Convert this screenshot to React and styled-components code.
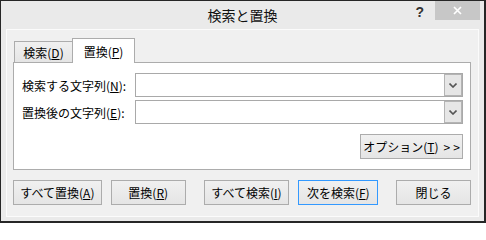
import React from 'react'
import styled, { createGlobalStyle } from 'styled-components'

const GlobalStyle = createGlobalStyle`
    html, body {
        margin: 0;
        padding: 0;
        background: #ffffff;
    }
    body {
        font-family: "Noto Sans CJK JP", "Noto Sans", sans-serif;
    }
`

const fontStack = `"Noto Sans CJK JP", "Noto Sans", sans-serif`

const Window = styled.div`
    box-sizing: border-box;
    width: 486px;
    height: 223px;
    border-style: solid;
    border-color: #262626;
    border-width: 1px 2px 2px 1px;
    background: #eaeaea;
    padding: 0 5px 4px 5px;
    display: flex;
    flex-direction: column;
    font-family: ${fontStack};
    color: #000;
`
const TitleBar = styled.div`
    height: 28px;
    flex: none;
    display: grid;
    grid-template-columns: 1fr auto 1fr;
    align-items: center;
`
const Title = styled.div`
    grid-column: 2;
    font-size: 14px;
    line-height: 1;
    color: #111;
`
const Controls = styled.div`
    grid-column: 3;
    justify-self: end;
    align-self: start;
    display: flex;
    align-items: flex-start;
    margin-right: -1px;
`
const HelpButton = styled.div`
    font-family: "Liberation Sans", Arial, sans-serif;
    font-weight: bold;
    font-size: 14px;
    line-height: 1;
    color: #333;
    margin-top: 4px;
    margin-right: 11px;
`
const CloseButton = styled.div`
    width: 45px;
    height: 19px;
    background: #c7c7c7;
    display: flex;
    align-items: center;
    justify-content: center;
`
const Client = styled.div`
    flex: 1;
    box-sizing: border-box;
    border: 1px solid #fbfbfb;
    background: #f0f0f0;
    padding: 8px 7px 0 6px;
    display: flex;
    flex-direction: column;
`
const TabRow = styled.div`
    display: flex;
    align-items: flex-end;
    height: 24px;
    padding-left: 1px;
`
const Tab = styled.div`
    box-sizing: border-box;
    width: ${(p) => (p.$active ? 63 : 59)}px;
    height: ${(p) => (p.$active ? 25 : 21)}px;
    margin-left: ${(p) => (p.$active ? -1 : 0)}px;
    margin-bottom: ${(p) => (p.$active ? -1 : 0)}px;
    position: relative;
    z-index: ${(p) => (p.$active ? 1 : 0)};
    border: 1px solid #acacac;
    border-bottom: none;
    background: ${(p) => (p.$active ? '#ffffff' : 'linear-gradient(#f0f0f0, #e5e5e5)')};
    font-size: 12px;
    display: flex;
    align-items: center;
    justify-content: center;
    padding-top: ${(p) => (p.$active ? 0 : 1)}px;
`
const Panel = styled.div`
    box-sizing: border-box;
    height: 108px;
    border: 1px solid #acacac;
    background: #ffffff;
    padding: 10px 7px 10px 8px;
    display: flex;
    flex-direction: column;
`
const FieldRow = styled.div`
    display: grid;
    grid-template-columns: 113px 1fr;
    align-items: center;
    height: 24px;
    margin-top: ${(p) => p.$gap || 0}px;
`
const Label = styled.div`
    font-size: 12px;
    line-height: 1;
    padding-top: 1px;
`
const Combo = styled.div`
    box-sizing: border-box;
    height: 24px;
    border: 1px solid #a9a9a9;
    background: #ffffff;
    display: flex;
    justify-content: flex-end;
`
const DropButton = styled.div`
    box-sizing: border-box;
    width: 18px;
    height: 100%;
    border: 1px solid #b4b4b4;
    background: #e6e6e6;
    display: flex;
    align-items: center;
    justify-content: center;
`
const OptionsRow = styled.div`
    display: flex;
    justify-content: flex-end;
    margin-top: 10px;
`
const Button = styled.div`
    box-sizing: border-box;
    width: ${(p) => p.$w}px;
    height: 25px;
    margin-left: ${(p) => p.$ml || 0}px;
    border: 1px solid ${(p) => (p.$primary ? '#3399ff' : '#acacac')};
    background: linear-gradient(#f0f0f0, #e5e5e5);
    font-size: 12px;
    line-height: 1;
    display: flex;
    align-items: center;
    justify-content: center;
    white-space: pre;
    padding-top: 1px;
`
const Arrows = styled.span`
    margin-left: 5px;
    letter-spacing: 3px;
    margin-right: -3px;
`
const ButtonRow = styled.div`
    display: flex;
    margin-top: 10px;
`
const Key = styled.u`
    text-underline-offset: 1px;
`

function Chevron() {
    return (
        <svg width="8" height="5" viewBox="0 0 8 5">
            <polyline points="0.5,0.5 4,4 7.5,0.5" fill="none" stroke="#555" strokeWidth="1.6" />
        </svg>
    )
}

function Cross() {
    return (
        <svg width="9" height="9" viewBox="0 0 9 9">
            <path d="M1 1 L8 8 M8 1 L1 8" stroke="#ffffff" strokeWidth="1.7" />
        </svg>
    )
}

const fields = [
    { label: '検索する文字列', key: 'N' },
    { label: '置換後の文字列', key: 'E' },
]

const buttons = [
    { text: 'すべて置換', key: 'A', w: 89, ml: 0 },
    { text: '置換', key: 'R', w: 75, ml: 9 },
    { text: 'すべて検索', key: 'I', w: 86, ml: 18 },
    { text: '次を検索', key: 'F', w: 80, ml: 9, primary: true },
]

function App() {
    return (
        <>
            <GlobalStyle />
            <Window>
                <TitleBar>
                    <Title>検索と置換</Title>
                    <Controls>
                        <HelpButton>?</HelpButton>
                        <CloseButton><Cross /></CloseButton>
                    </Controls>
                </TitleBar>
                <Client>
                    <TabRow>
                        <Tab>検索(<Key>D</Key>)</Tab>
                        <Tab $active>置換(<Key>P</Key>)</Tab>
                    </TabRow>
                    <Panel>
                        {fields.map((f, i) => (
                            <FieldRow key={f.key} $gap={i ? 3 : 0}>
                                <Label>{f.label}(<Key>{f.key}</Key>):</Label>
                                <Combo><DropButton><Chevron /></DropButton></Combo>
                            </FieldRow>
                        ))}
                        <OptionsRow>
                            <Button $w={103}>オプション(<Key>T</Key>)<Arrows>{'>>'}</Arrows></Button>
                        </OptionsRow>
                    </Panel>
                    <ButtonRow>
                        {buttons.map((b) => (
                            <Button key={b.key} $w={b.w} $ml={b.ml} $primary={b.primary}>
                                {b.text}(<Key>{b.key}</Key>)
                            </Button>
                        ))}
                        <Button $w={75} $ml={18}>閉じる</Button>
                    </ButtonRow>
                </Client>
            </Window>
        </>
    )
}

export default App
